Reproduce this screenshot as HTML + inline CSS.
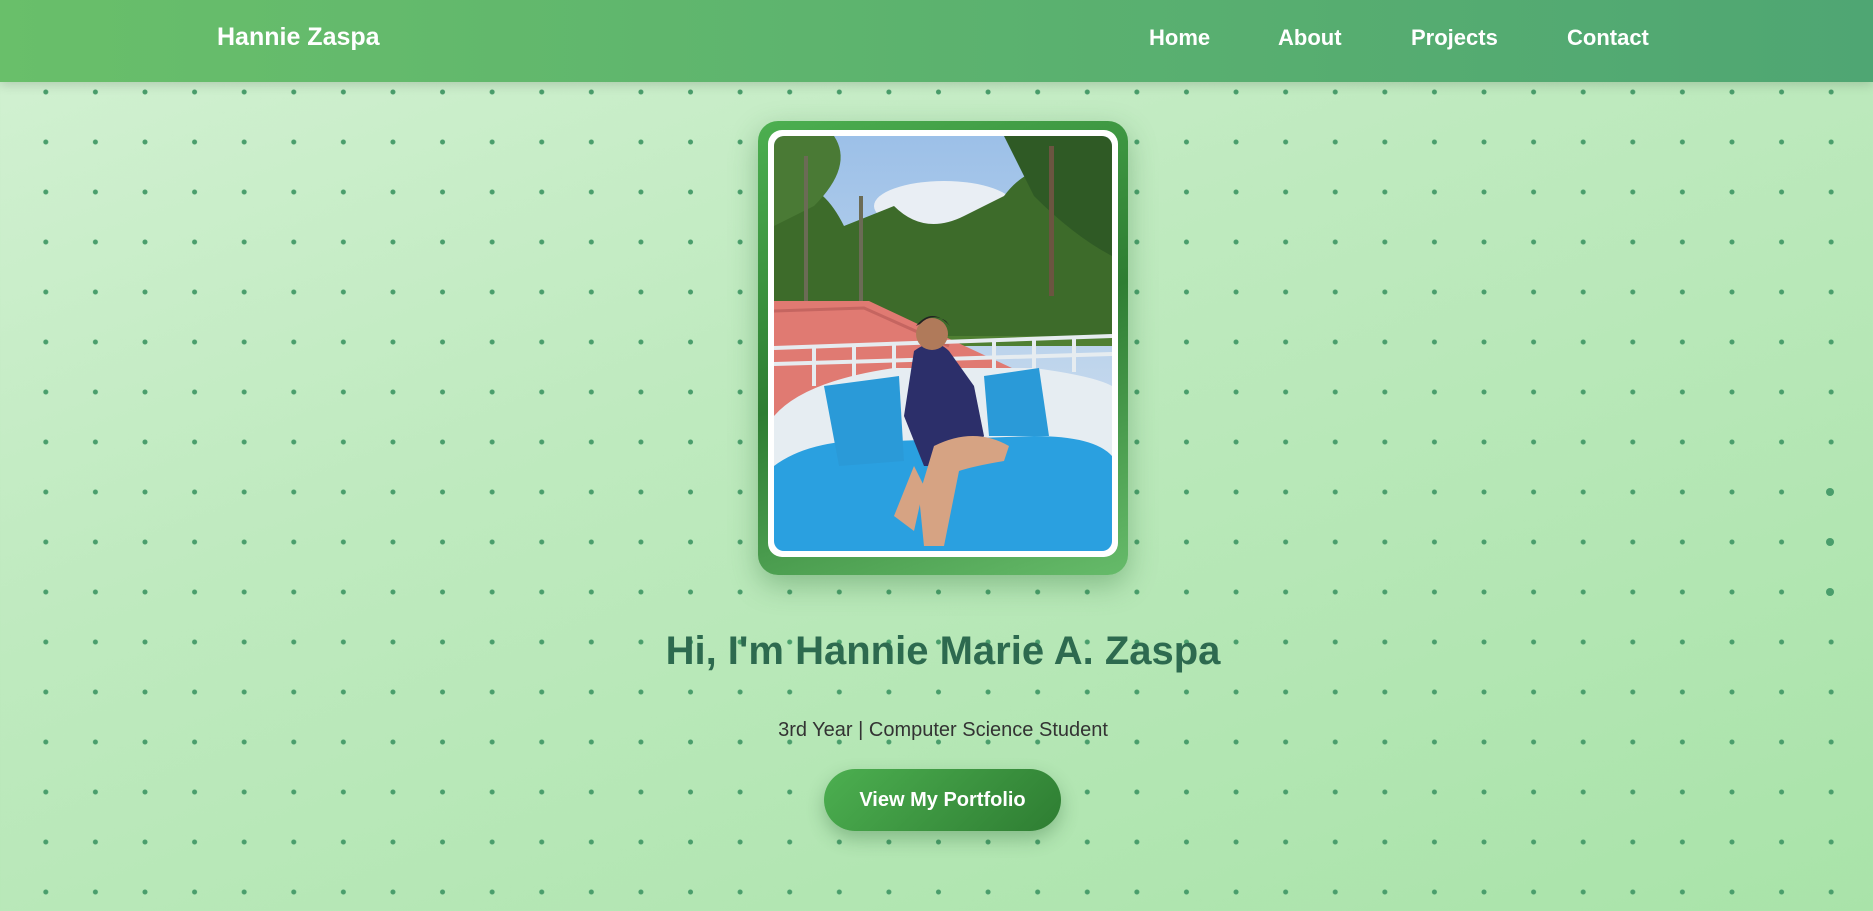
<!DOCTYPE html>
<html><head><meta charset="utf-8"><style>
*{margin:0;padding:0;box-sizing:border-box}
html,body{width:1873px;height:911px;overflow:hidden}
body{font-family:"Liberation Sans",Arial,sans-serif;position:relative;
background:linear-gradient(160deg,#d3f1d3 0%,#bfeabf 40%,#a9e3a9 100%);}
.dots{position:absolute;left:0;top:82px;width:1873px;height:829px;
background-image:radial-gradient(circle,#4a9e6c 2.2px,transparent 2.8px);
background-size:49.6px 50px;background-position:21px -15px;}
nav{position:absolute;left:0;top:0;width:1873px;height:82px;
background:linear-gradient(90deg,#69bf6a,#4fa673);box-shadow:0 3px 10px rgba(0,0,0,.15);z-index:2}
nav .logo{position:absolute;left:217px;top:23px;color:#fff;font-weight:bold;font-size:25px}
nav a{position:absolute;top:25px;color:#fff;font-weight:bold;font-size:22px;text-decoration:none}
.frame{position:absolute;left:758px;top:121px;width:370px;height:454px;border-radius:20px;
background:linear-gradient(160deg,#4caf50 0%,#2e7d32 50%,#66bb6a 100%);
box-shadow:0 10px 28px rgba(40,110,50,.35)}
.inner{position:absolute;left:10px;top:9px;width:350px;height:427px;border-radius:14px;background:#fff;overflow:hidden}
.inner svg{position:absolute;left:6px;top:6px;border-radius:10px}
h1{position:absolute;left:0;width:1886px;top:629px;text-align:center;font-size:40px;color:#2d6a4f;font-weight:bold}
.sub{position:absolute;left:0;width:1886px;top:719px;text-align:center;font-size:20px;color:#333}
.btn{position:absolute;left:824px;top:769px;width:237px;height:62px;border-radius:31px;
background:linear-gradient(135deg,#4caf50,#2e7d32);color:#fff;font-weight:bold;font-size:20px;
text-align:center;line-height:62px;box-shadow:0 8px 18px rgba(30,90,40,.3)}
.big{position:absolute;width:8px;height:8px;border-radius:50%;background:#4a9e6c}
</style></head><body>
<div class="dots"></div>
<div class="big" style="left:1826px;top:488px"></div>
<div class="big" style="left:1826px;top:538px"></div>
<div class="big" style="left:1826px;top:588px"></div>
<nav><div class="logo">Hannie Zaspa</div>
<a style="left:1149px">Home</a><a style="left:1278px">About</a><a style="left:1411px">Projects</a><a style="left:1567px">Contact</a></nav>
<div class="frame"><div class="inner">
<svg width="338" height="415" viewBox="0 0 338 415">
<defs><linearGradient id="sky" x1="0" y1="0" x2="0" y2="1"><stop offset="0" stop-color="#9cc0e8"/><stop offset="1" stop-color="#dbe6f0"/></linearGradient></defs>
<rect width="338" height="415" fill="url(#sky)"/>
<ellipse cx="170" cy="70" rx="70" ry="25" fill="#e9eef4"/>
<rect x="0" y="100" width="338" height="110" fill="#4f7f32"/>
<path d="M0 60 Q40 30 70 90 L120 70 Q150 100 190 80 L230 60 Q260 20 300 40 L338 10 L338 200 L0 200Z" fill="#3d6b2a"/>
<path d="M230 0 L338 0 L338 120 Q300 100 260 60Z" fill="#2f5a25"/>
<path d="M0 0 L60 0 Q80 30 40 70 L0 90Z" fill="#4a7a35"/>
<rect x="30" y="20" width="4" height="150" fill="#6b6b55"/><rect x="85" y="60" width="4" height="110" fill="#6b6b55"/><rect x="275" y="10" width="5" height="150" fill="#6b5540"/>
<path d="M0 165 L95 165 L180 205 L255 240 L0 280Z" fill="#e07a72"/>
<path d="M0 175 L90 172 L175 210" stroke="#c56560" stroke-width="3" fill="none"/>
<g stroke="#e6ecf0" stroke-width="4" fill="none"><path d="M0 212 L338 200"/><path d="M0 228 L338 218"/>
<path d="M40 212 V250 M80 210 V248 M120 208 V245 M220 205 V240 M260 203 V238 M300 201 V236"/></g>
<path d="M0 280 Q30 245 120 232 L260 232 Q320 240 338 250 L338 340 L0 360Z" fill="#e6edf2"/>
<path d="M0 330 Q40 300 120 305 L260 300 Q320 300 338 320 L338 415 L0 415Z" fill="#2aa0e0"/>
<path d="M50 250 L125 240 L130 325 L65 330Z" fill="#2a9ad8"/>
<path d="M210 240 L265 232 L275 300 L215 300Z" fill="#2a9ad8"/>
<path d="M140 215 Q160 200 175 215 L200 250 L210 300 L190 330 L150 330 L130 280Z" fill="#2c2f6a"/>
<circle cx="158" cy="198" r="16" fill="#b07a5a"/>
<path d="M142 190 Q158 170 176 190 L172 185 Q158 176 146 188Z" fill="#222"/>
<path d="M160 310 Q200 290 235 310 L230 325 Q200 330 185 335 L170 410 L150 410 L145 360Z" fill="#d6a383"/>
<path d="M140 330 L120 380 L140 395 L150 350Z" fill="#d6a383"/>
</svg></div></div>
<h1>Hi, I'm Hannie Marie A. Zaspa</h1>
<div class="sub">3rd Year | Computer Science Student</div>
<div class="btn">View My Portfolio</div>
</body></html>
